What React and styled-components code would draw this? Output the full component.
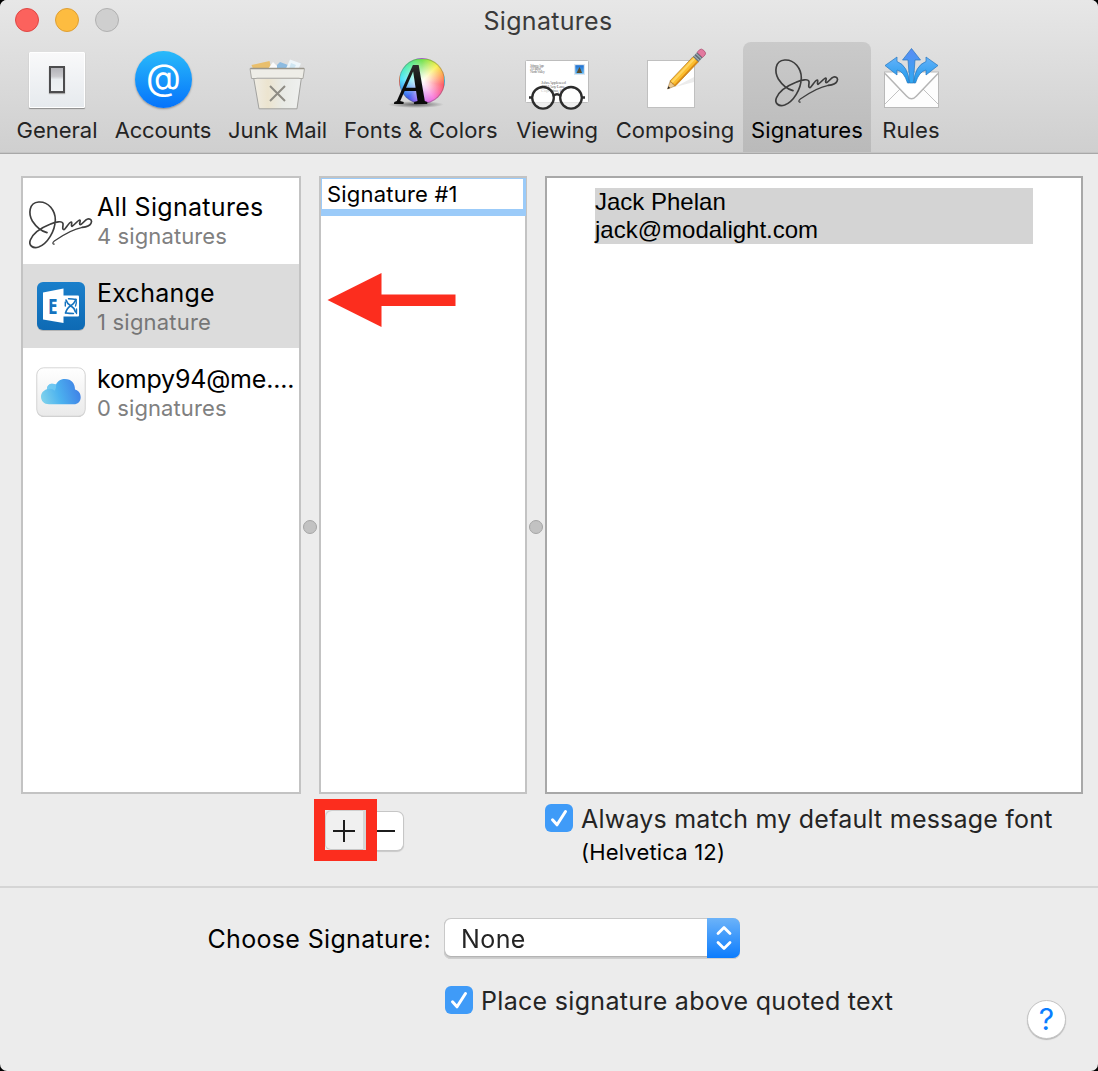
import React from "react";
import styled, { createGlobalStyle, css } from "styled-components";

const Global = createGlobalStyle`
  * { box-sizing: border-box; }
  body { margin: 0; background: #000; }
`;

const Window = styled.main`
  width: 1098px;
  height: 1071px;
  display: flex;
  flex-direction: column;
  overflow: hidden;
  border-radius: 7px;
  background: #ececec;
  color: #000;
  font-family: Inter, "Liberation Sans", sans-serif;
`;

/* Text ------------------------------------------------------------------ */

const Text = styled.span`
  display: block;
  white-space: nowrap;
  font-size: ${(p) => p.$size || 22}px;
  line-height: ${(p) => p.$line || 28}px;
  letter-spacing: ${(p) => p.$track || 0}px;
  color: ${(p) => p.$color || "#000"};
`;

/* Header ---------------------------------------------------------------- */

const Header = styled.header`
  height: 154px;
  flex: none;
  display: flex;
  flex-direction: column;
  background: linear-gradient(#e7e7e7, #cfcfcf);
  border-bottom: 1px solid #a8a8a8;
  box-shadow: inset 0 -1px 0 #c4c4c4;
`;

const TitleBar = styled.div`
  height: 42px;
  display: grid;
  grid-template-columns: 1fr auto 1fr;
  align-items: start;
  padding: 7px 2px 0 0;
`;

const Lights = styled.div`
  display: flex;
  gap: 16px;
  padding: 1px 0 0 15px;
`;

const Light = styled.i`
  width: 24px;
  height: 24px;
  border-radius: 50%;
  background: ${(p) => p.$fill};
  border: 1px solid ${(p) => p.$edge};
`;

const Toolbar = styled.nav`
  display: flex;
  height: 110px;
  padding-left: 8px;
`;

const Item = styled.button`
  width: ${(p) => p.$w}px;
  height: 110px;
  padding: 8px 0 0;
  border: 0;
  background: none;
  font-family: inherit;
  display: flex;
  flex-direction: column;
  align-items: center;
  gap: 8px;
  ${(p) =>
    p.$active &&
    css`
      border-radius: 8px 8px 0 0;
      background: linear-gradient(#cacaca, #bababa);
    `}
`;

const IconSlot = styled.div`
  height: 58px;
  display: flex;
  justify-content: center;
  align-items: ${(p) => (p.$low ? "flex-end" : "flex-start")};
  overflow: visible;
  svg { display: block; overflow: visible; }
`;

const SwitchPlate = styled.div`
  width: 56px;
  height: 56px;
  margin-top: 2px;
  padding-bottom: 2px;
  display: grid;
  place-items: center;
  background: linear-gradient(#f9f9fa, #e6eaee);
  border: 1px solid #fff;
  border-radius: 1px;
  box-shadow: 0 1px 1px rgba(0, 0, 0, 0.35);
`;

const Rocker = styled.div`
  width: 16px;
  height: 27px;
  border: 2px solid #4c4c4e;
  background: linear-gradient(#b3b3b8 0, #c9c9cd 36%, #e9edf0 50%, #eff2f4);
  box-shadow: 0 1px 1px #aaa;
`;

const AtDisc = styled.div`
  width: 57px;
  height: 57px;
  margin-top: 1px;
  border-radius: 50%;
  background: linear-gradient(#29bafa, #0573fb);
  box-shadow: 0 1px 2px rgba(0, 0, 0, 0.35);
`;

const Stack = styled.div`
  display: grid;
  width: 60px;
  height: 58px;
  > * { grid-area: 1 / 1; }
`;

const Wheel = styled.div`
  width: 46px;
  height: 46px;
  margin: 8px 0 0 8px;
  border-radius: 50%;
  border: 1px solid rgba(80, 80, 80, 0.35);
  background: radial-gradient(circle at 52% 50%, #fff 0, rgba(255, 255, 255, 0.75) 20%, rgba(255, 255, 255, 0) 68%),
    conic-gradient(#6fe04a, #f9f04a 45deg, #ff9a4a 75deg, #ff5560 100deg, #f871d8 145deg, #c76cf5 180deg, #3b5df0 220deg, #4de3fb 275deg, #55efae 315deg, #6fe04a);
`;

/* Panels ---------------------------------------------------------------- */

const Panes = styled.section`
  display: grid;
  grid-template-columns: 280px 18px 208px 18px 538px;
  height: 618px;
  margin: 22px 0 0 21px;
  flex: none;
`;

const Pane = styled.div`
  min-width: 0;
  background: #fff;
  border: 2px solid ${(p) => p.$edge || "#c3c3c3"};
`;

const Splitter = styled.div`
  display: grid;
  place-items: center;
  padding-top: 84px;
  &::after {
    content: "";
    width: 12px;
    height: 12px;
    border-radius: 50%;
    border: 1px solid #a5a5a5;
    background: #c2c2c2;
  }
`;

const Account = styled.div`
  height: ${(p) => p.$h || 84}px;
  display: grid;
  grid-template-columns: 74px 1fr;
  background: ${(p) => (p.$active ? "#dcdcdc" : "#fff")};
  padding-top: ${(p) => p.$top || 0}px;
`;

const AccountIcon = styled.div`
  display: flex;
  padding: ${(p) => p.$pad};
  svg { display: block; overflow: visible; }
`;

const AccountText = styled.div`
  padding-top: 14px;
`;

const ListPane = styled(Pane)`
  display: flex;
  flex-direction: column;
`;

const EditRow = styled.div`
  height: 38px;
  margin-right: -1px;
  padding: 1px 3px 7px 1px;
  background: #9bcbf9;
`;

const EditField = styled.div`
  height: 30px;
  padding: 1px 0 0 5px;
  background: #fff;
`;

const ArrowMark = styled.svg`
  display: block;
  margin: 56px 0 0 6px;
`;

const Editor = styled(Pane)`
  padding: 10px 48px;
`;

const Selection = styled.div`
  width: 438px;
  background: #d4d4d4;
  font-family: "Liberation Sans", Arial, sans-serif;
  font-size: 24px;
  line-height: 28px;
`;

/* Controls under the panes ---------------------------------------------- */

const Controls = styled.section`
  height: 94px;
  flex: none;
  display: grid;
  grid-template-columns: 231px 1fr;
  padding-left: 314px;
  border-bottom: 2px solid #d5d5d5;
`;

const ButtonPair = styled.div`
  display: flex;
  align-items: flex-start;
  padding-top: 5px;
`;

const Marker = styled.div`
  position: relative;
  z-index: 1;
  width: 63px;
  height: 62px;
  flex: none;
  border: 11px solid #fc2d1e;
  background: #ececec;
`;

const Segment = styled.button`
  display: grid;
  place-items: center;
  height: 40px;
  padding: 0;
  border: 0;
  svg { display: block; }
  ${(p) =>
    p.$first
      ? css`
          width: 41px;
          padding-top: 2px;
          border-radius: 6px 0 0 6px;
          border-right: 3px solid #d6d6d6;
          background: #f0f0f0;
          box-shadow: inset 1px 1px 0 #cfcfcf, inset 0 -1px 0 #c6c6c6;
        `
      : css`
          width: 27px;
          height: 40px;
          margin-top: 12px;
          padding-right: 9px;
          border-radius: 0 7px 7px 0;
          background: #fff;
          border: 1px solid #c6c6c6;
          border-left: 0;
          box-shadow: 0 1px 1px rgba(0, 0, 0, 0.15);
        `}
`;

const CheckRow = styled.label`
  display: grid;
  grid-template-columns: 28px auto;
  column-gap: ${(p) => p.$gap || 8}px;
  justify-content: start;
  align-content: start;
  padding-top: ${(p) => p.$top || 0}px;
`;

const Box = styled.span`
  width: 28px;
  height: 28px;
  border-radius: 6px;
  background: #3f9bf8;
  svg { display: block; }
`;

const FontNote = styled.div`
  grid-column: 2;
  padding-top: 6px;
`;

/* Footer ---------------------------------------------------------------- */

const Footer = styled.footer`
  flex: 1;
  display: grid;
  grid-template-columns: 430px 1fr 40px;
  column-gap: 14px;
  grid-template-rows: 40px 56px;
  row-gap: 28px;
  padding: 30px 31px 0 0;
`;

const FieldLabel = styled.div`
  display: flex;
  justify-content: flex-end;
  align-items: center;
  padding-top: 2px;
  margin-right: -1px;
`;

const Popup = styled.div`
  width: 296px;
  height: 40px;
  display: flex;
  align-items: flex-start;
  justify-content: space-between;
  padding-left: 17px;
  border-radius: 7px;
  overflow: hidden;
  background: #fff;
  box-shadow: inset 0 0 0 1px #c9c9c9, inset 0 -1px 0 1px #b4b4b4;
  filter: drop-shadow(0 1px 0.5px rgba(0, 0, 0, 0.12));
`;

const Stepper = styled.span`
  width: 33px;
  height: 40px;
  display: grid;
  place-items: center;
  background: linear-gradient(#6cb3f9, #0c7cfd);
  svg { display: block; }
`;

const FooterCheck = styled(CheckRow)`
  grid-column: 2;
  grid-row: 2;
  padding-left: 1px;
`;

const Help = styled.button`
  grid-column: 3;
  grid-row: 2;
  width: 39px;
  height: 39px;
  margin-top: 14px;
  padding: 0;
  border: 1px solid #c4c4c4;
  border-radius: 50%;
  background: #fff;
  box-shadow: 0 1px 1px rgba(0, 0, 0, 0.22);
  color: #0a7dff;
  font: 400 30px/37px Inter, "Liberation Sans", sans-serif;
`;

/* Drawings -------------------------------------------------------------- */

const Scribble = ({ color = "#3d3d3d" }) => (
  <svg width="66" height="50" viewBox="494 182 198 150" fill="none" stroke={color} strokeLinecap="round" strokeLinejoin="round">
    <path
      strokeWidth="5"
      d="M551 280C535 276 518 262 507 245C495 224 496 190 526 188C556 186 576 214 576 242C575 275 553 313 526 323C508 329 495 318 501 302C510 280 540 263 560 255C576 248 597 243 599 253C600 260 595 271 602 271C606 271 617 249 623 248C628 247 622 261 626 261C631 260 644 242 649 242C654 243 645 255 651 256C657 256 664 241 673 239C683 237 687 245 683 252C679 260 667 263 657 264"
    />
    <path strokeWidth="3.5" d="M657 264C630 269 593 291 573 305C566 310 568 315 573 314" />
  </svg>
);

const Tick = () => (
  <svg width="28" height="28" viewBox="0 0 28 28" fill="none" stroke="#fff" strokeWidth="3" strokeLinecap="round" strokeLinejoin="round">
    <path d="M7.5 15.8l4.500 5L20.500 7.500" />
  </svg>
);

const AtSign = () => (
  <AtDisc>
    <svg width="57" height="57" viewBox="0 0 57 57">
      <text x="28.500" y="39" textAnchor="middle" fontFamily="Inter" fontSize="36" fill="#fff">@</text>
    </svg>
  </AtDisc>
);

const Bin = () => (
  <svg width="58" height="58" viewBox="0 0 58 58">
    <defs>
      <linearGradient id="bin" x1="0" x2="1">
        <stop offset="0" stopColor="#efece4" />
        <stop offset=".3" stopColor="#ece4cf" />
        <stop offset=".6" stopColor="#e8eae5" />
        <stop offset="1" stopColor="#eff0ef" />
      </linearGradient>
    </defs>
    <path d="M2.500 15l18-4 2 9H4.500z" fill="#e9bf6d" />
    <path d="M19 19l5-7 7 7z" fill="#fafafa" />
    <path d="M28 15l3-3 8 3v5H28z" fill="#8dbbe0" />
    <path d="M37 18.500l4-9 11 4-3 6z" fill="#eef6fa" />
    <path d="M42 13l5 2-2 4h-5z" fill="#cfe6f2" />
    <path d="M4.500 27h48l-4.500 31.800h-38z" fill="url(#bin)" stroke="#a2a29f" />
    <path d="M1 18.500h54.500l-1.500 10h-51.500z" fill="#eeede7" stroke="#aaa9a4" />
    <path d="M1.500 18.500h53.500" stroke="#99958a" strokeWidth="1.300" />
    <path d="M7.500 28h43" stroke="#c6c4be" />
    <path d="M21 36l15 15M36 36l-15 15" stroke="#8e8c84" strokeWidth="2" />
  </svg>
);

const FontsColors = () => (
  <Stack>
    <Wheel />
    <svg width="60" height="58" viewBox="0 0 60 58">
      <defs>
        <linearGradient id="ink" x1="0" y1="0" x2="0" y2="1">
          <stop offset="0" stopColor="#444" />
          <stop offset=".55" stopColor="#0b0b0b" />
        </linearGradient>
        <radialGradient id="cast">
          <stop offset="0" stopColor="#000" stopOpacity=".55" />
          <stop offset="1" stopColor="#000" stopOpacity="0" />
        </radialGradient>
      </defs>
      <ellipse cx="25" cy="54.500" rx="28" ry="3.500" fill="url(#cast)" />
      <text x="5.500" y="54" textLength="33" lengthAdjust="spacingAndGlyphs" fontFamily="Liberation Serif" fontStyle="italic" fontWeight="bold" fontSize="60" fill="url(#ink)">A</text>
    </svg>
  </Stack>
);

const Viewing = () => (
  <svg width="64" height="58" viewBox="0 0 64 58">
    <defs>
      <linearGradient id="stamp" x1="0" y1="0" x2="0" y2="1">
        <stop offset="0" stopColor="#1d6fd0" />
        <stop offset="1" stopColor="#5cb6f5" />
      </linearGradient>
    </defs>
    <rect x=".5" y="10.500" width="63" height="42" rx="1" fill="#fff" stroke="#bdbdbd" />
    <g fontFamily="Liberation Serif" fill="#777">
      <text x="5" y="17" fontSize="3.800" textLength="14">Johnny App</text>
      <text x="5" y="20.200" fontSize="3.800" textLength="11">21 Hill Rd</text>
      <text x="5" y="23.400" fontSize="3.800" textLength="15">North Valley</text>
      <text x="16" y="34" fontSize="5" textLength="25">John Appleseed</text>
      <text x="16" y="38" fontSize="5" textLength="24">1234 Any Lane</text>
      <text x="16" y="42" fontSize="5" textLength="22">Cupertino, C</text>
    </g>
    <rect x="49" y="14" width="11" height="11" fill="#dce5ee" />
    <rect x="50.300" y="15.200" width="8.500" height="8.500" fill="url(#stamp)" />
    <path d="M51.500 23l3-6 1.500 3 1 3z" fill="#5a4b2b" />
    <g fill="rgba(255,255,255,.6)" stroke="#2d2d2d" strokeWidth="2.300">
      <circle cx="18" cy="47.800" r="10.800" />
      <circle cx="46" cy="47.800" r="10.800" />
      <path d="M28.500 46q3.500-3.500 7 0M4 47.500h3M56.500 47.500h3.500" fill="none" />
    </g>
  </svg>
);

const Composing = () => (
  <svg width="60" height="58" viewBox="0 0 60 58">
    <rect x="2.500" y="10.500" width="47" height="47" fill="#fff" stroke="#c0c0c0" />
    <path d="M30 37L49 27v5L34 36z" fill="#ececec" />
    <g transform="translate(22.500 39) rotate(-46.500)">
      <path d="M0 0L8-3.700v7.400z" fill="#ecc98f" stroke="#9b7338" strokeWidth=".5" />
      <path d="M0 0l2.600-1.300v2.600z" fill="#222" />
      <path d="M8-3.700h33v7.400H8l-1-1.200 1-1.200-1-1.200 1-1.200-1-1.200z" fill="#fbbd2e" stroke="#a76b16" strokeWidth=".6" />
      <path d="M8-2.600h33v2.300H8z" fill="#ffd561" />
      <path d="M8 2.100h33v1.500H8z" fill="#d98a18" />
      <path d="M41-3.800h6v7.600h-6z" fill="#64727c" />
      <path d="M42.500-3.800v7.600M45.300-3.800v7.600" stroke="#cfd6da" strokeWidth=".8" />
      <path d="M47-3.800h3.500q2.500 0 2.500 3.800t-2.500 3.800H47z" fill="#e2799f" stroke="#a6486b" strokeWidth=".6" />
    </g>
  </svg>
);

const Rules = () => (
  <svg width="56" height="58" viewBox="0 0 56 58">
    <defs>
      <linearGradient id="arrows" x1="0" y1="0" x2="0" y2="1">
        <stop offset="0" stopColor="#5b8cf4" />
        <stop offset="1" stopColor="#2fa9f2" />
      </linearGradient>
      <linearGradient id="side" x1="0" y1="0" x2="0" y2="1">
        <stop offset="0" stopColor="#63b2fa" />
        <stop offset="1" stopColor="#1f99ea" />
      </linearGradient>
    </defs>
    <rect x="1.500" y="22" width="54" height="35.500" fill="#fdfdfd" stroke="#b9b9b9" />
    <path d="M2 54l15-15M55 54l-15-15" stroke="#c2c2c2" fill="none" />
    <path d="M2 23.500L23.500 46q5 5.500 10 0L55 23.500" stroke="#b5b5b5" strokeWidth="1.500" fill="#fff" />
    <g stroke="#2876bd" strokeWidth=".7" transform="translate(.5 .5)">
      <path d="M1.500 15L13.500 6.500V11Q24.500 15 26 32.500H24Q20.500 21 13.500 19.500V24.500z" fill="url(#side)" />
      <path d="M54.500 15L42.500 6.500V11Q31.500 15 30 32.500H32Q35.500 21 42.500 19.500V24.500z" fill="url(#side)" />
      <path d="M28-2L37 9.500H31.500L29.800 32.500H26.200L24.500 9.500H19z" fill="url(#arrows)" />
    </g>
  </svg>
);

const ExchangeIcon = () => (
  <svg width="48" height="48" viewBox="0 0 48 48">
    <defs>
      <linearGradient id="exch" x1="0" y1="0" x2="0" y2="1">
        <stop offset="0" stopColor="#1a7fcb" />
        <stop offset="1" stopColor="#0e6ab4" />
      </linearGradient>
    </defs>
    <rect y="1" width="48" height="48" rx="6" fill="#000" opacity=".18" />
    <rect width="48" height="48" rx="6" fill="url(#exch)" />
    <rect x="25" y="13.500" width="17" height="21" rx="1" fill="#fff" />
    <g fill="none" stroke="#1473bf" strokeWidth="1.700" strokeLinecap="round">
      <path d="M29 18q1 3.500 4.500 5.500T38.500 30M39 17.500q-2 4.500-5.500 6.500T28.500 31" />
      <path d="M31.500 16.800q4 .2 7.500.7.800 3.500-.500 6.500M36.500 31.500q-4 0-7.500-.500M28.300 20v4M39.500 27v4.500" strokeWidth="1.400" />
    </g>
    <path d="M6 10.500L26.500 6.500v34.500L6 37.500z" fill="#fff" />
    <text x="11" y="31.500" textLength="9.500" lengthAdjust="spacingAndGlyphs" fontFamily="Open Sans" fontWeight="bold" fontSize="22" fill="#1473bf">E</text>
  </svg>
);

const CloudIcon = () => (
  <svg width="50" height="51" viewBox="0 0 50 51">
    <defs>
      <linearGradient id="cloud" x1="0" y1=".7" x2="1" y2=".5">
        <stop offset="0" stopColor="#7fd2ec" />
        <stop offset=".45" stopColor="#4cb2ef" />
        <stop offset="1" stopColor="#3f80e6" />
      </linearGradient>
      <linearGradient id="tile" x1="0" y1="0" x2="0" y2="1">
        <stop offset="0" stopColor="#fff" />
        <stop offset="1" stopColor="#eaeaea" />
      </linearGradient>
    </defs>
    <rect x=".8" y="1.300" width="48.400" height="48.700" rx="7" fill="#bbb" />
    <rect x=".8" y=".8" width="48.400" height="48.400" rx="7" fill="url(#tile)" stroke="#d6d6d6" />
    <path d="M13 37.300C8 37.300 5 33.800 5 29.800C5 25.800 8 23 11 22.300C10.500 17 16 15.500 20 17.500C22 13.500 25 12 29 12C35.500 12 39 16.500 39 22.500C43 23.500 44.700 27 44.700 30.200C44.700 34.500 41.500 37.300 38 37.300z" fill="url(#cloud)" />
    <path d="M11 22.300C14 21 17 22 18.500 23.800C20 21.500 20.500 19.500 20 17.500C16 15.500 10.500 17 11 22.300z" fill="#7dd0f3" opacity=".6" />
  </svg>
);

const tools = [
  { label: "General", w: 98, track: 0, icon: <SwitchPlate><Rocker /></SwitchPlate> },
  { label: "Accounts", w: 114, track: -0.2, icon: <AtSign /> },
  { label: "Junk Mail", w: 115, track: -0.08, icon: <Bin /> },
  { label: "Fonts & Colors", w: 172, track: 0.19, icon: <FontsColors /> },
  { label: "Viewing", w: 100, track: -0.18, icon: <Viewing /> },
  { label: "Composing", w: 136, track: 0, icon: <Composing /> },
  { label: "Signatures", w: 128, track: 0.12, icon: <Scribble />, active: true },
  { label: "Rules", w: 80, track: 0.15, icon: <Rules /> },
];

export default function App() {
  return (
    <Window>
      <Global />
      <Header>
        <TitleBar>
          <Lights>
            <Light $fill="#fc625d" $edge="#df4744" />
            <Light $fill="#fdbc40" $edge="#de9f34" />
            <Light $fill="#cfcfcf" $edge="#b1b1b1" />
          </Lights>
          <Text $size={25} $track={0.3} $color="#3a3a3a">Signatures</Text>
        </TitleBar>
        <Toolbar>
          {tools.map((t) => (
            <Item key={t.label} $w={t.w} $active={t.active}>
              <IconSlot $low={t.active}>{t.icon}</IconSlot>
              <Text $track={t.track} $color={t.active ? "#000" : "#242424"}>{t.label}</Text>
            </Item>
          ))}
        </Toolbar>
      </Header>

      <Panes>
        <Pane>
          <Account $h={86}>
            <AccountIcon $pad="22px 0 0 5px"><Scribble /></AccountIcon>
            <AccountText>
              <Text $size={25} $line={30} $track={0.3}>All Signatures</Text>
              <Text $line={28} $track={0.1} $color="#808080">4 signatures</Text>
            </AccountText>
          </Account>
          <Account $active>
            <AccountIcon $pad="18px 0 0 14px"><ExchangeIcon /></AccountIcon>
            <AccountText>
              <Text $size={25} $line={30} $track={0.25}>Exchange</Text>
              <Text $line={28} $track={0.2} $color="#767676">1 signature</Text>
            </AccountText>
          </Account>
          <Account $h={86} $top={2}>
            <AccountIcon $pad="17px 0 0 13px"><CloudIcon /></AccountIcon>
            <AccountText>
              <Text $size={25} $line={30} $track={-0.2}>kompy94@me....</Text>
              <Text $line={28} $track={0.1} $color="#808080">0 signatures</Text>
            </AccountText>
          </Account>
        </Pane>
        <Splitter />
        <ListPane>
          <EditRow>
            <EditField><Text $track={0.2}>Signature #1</Text></EditField>
          </EditRow>
          <ArrowMark width="130" height="56" viewBox="327 272 130 56">
            <path d="M327.500 300L381.500 273V294.500H455.500V306H381.500V327z" fill="#fc2d1e" />
          </ArrowMark>
        </ListPane>
        <Splitter />
        <Editor $edge="#a8a8a8">
          <Selection>
            <div>Jack Phelan</div>
            <div>jack@modalight.com</div>
          </Selection>
        </Editor>
      </Panes>

      <Controls>
        <ButtonPair>
          <Marker>
            <Segment $first>
              <svg width="22" height="22" viewBox="0 0 22 22" stroke="#1c1c1c" strokeWidth="2">
                <path d="M11 0v22M0 11h22" />
              </svg>
            </Segment>
          </Marker>
          <Segment>
            <svg width="18" height="2" viewBox="0 0 18 2"><path d="M0 0h18v2H0z" fill="#1c1c1c" /></svg>
          </Segment>
        </ButtonPair>
        <CheckRow $top={10}>
          <Box><Tick /></Box>
          <Text $size={25} $line={30} $track={0.22} $color="#242424">Always match my default message font</Text>
          <FontNote><Text $track={0.18} $line={24}>(Helvetica 12)</Text></FontNote>
        </CheckRow>
      </Controls>

      <Footer>
        <FieldLabel><Text $size={25} $track={0.34}>Choose Signature:</Text></FieldLabel>
        <Popup>
          <Text $size={25} $line={42} $track={0.4} $color="#242424">None</Text>
          <Stepper>
            <svg width="16" height="26" viewBox="0 0 16 26" fill="none" stroke="#fff" strokeWidth="2.800" strokeLinecap="round" strokeLinejoin="round">
              <path d="M2 8.500L8 2.500l6 6M2 17.500l6 6 6-6" />
            </svg>
          </Stepper>
        </Popup>
        <FooterCheck $gap={8}>
          <Box><Tick /></Box>
          <Text $size={25} $line={30} $track={0.31} $color="#242424">Place signature above quoted text</Text>
        </FooterCheck>
        <Help>?</Help>
      </Footer>
    </Window>
  );
}
